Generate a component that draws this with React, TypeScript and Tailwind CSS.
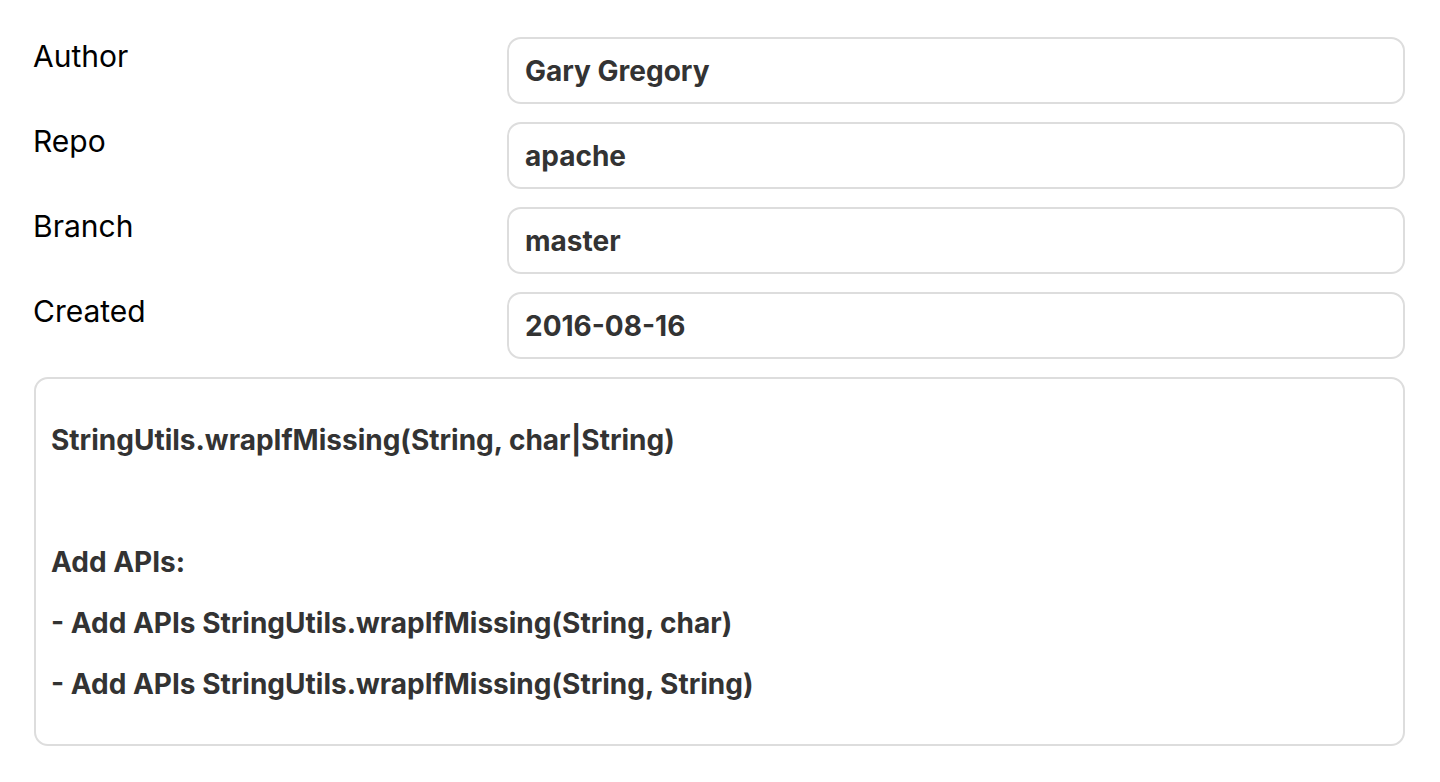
const fields = [
  { label: 'Author', value: 'Gary Gregory' },
  { label: 'Repo', value: 'apache' },
  { label: 'Branch', value: 'master' },
  { label: 'Created', value: '2016-08-16' },
]

const message = [
  'StringUtils.wrapIfMissing(String, char|String)',
  '',
  'Add APIs:',
  '- Add APIs StringUtils.wrapIfMissing(String, char)',
  '- Add APIs StringUtils.wrapIfMissing(String, String)',
]

export default function App() {
  return (
    <div className="min-h-screen bg-white font-['Inter',sans-serif] pl-[33px] pr-[35px] pt-[37px]">
      <div className="flex flex-col gap-[18px]">
        {fields.map((f) => (
          <div key={f.label} className="flex items-start">
            <div className="w-[474px] shrink-0 text-[30px] leading-[38px] text-black">{f.label}</div>
            <div className="flex-1 h-[67px] rounded-[14px] border-2 border-[#dddddd] flex items-center px-[16px] text-[28px] font-bold text-[#333333]">
              {f.value}
            </div>
          </div>
        ))}
      </div>

      {/* commit message */}
      <div className="mt-[18px] ml-px rounded-[14px] border-2 border-[#dddddd] pl-[15px] pt-[31px] pb-[29px]">
        {message.map((line, i) => (
          <div key={i} className="h-[61px] leading-[61px] text-[28px] font-bold text-[#333333]">
            {line}
          </div>
        ))}
      </div>
    </div>
  )
}
